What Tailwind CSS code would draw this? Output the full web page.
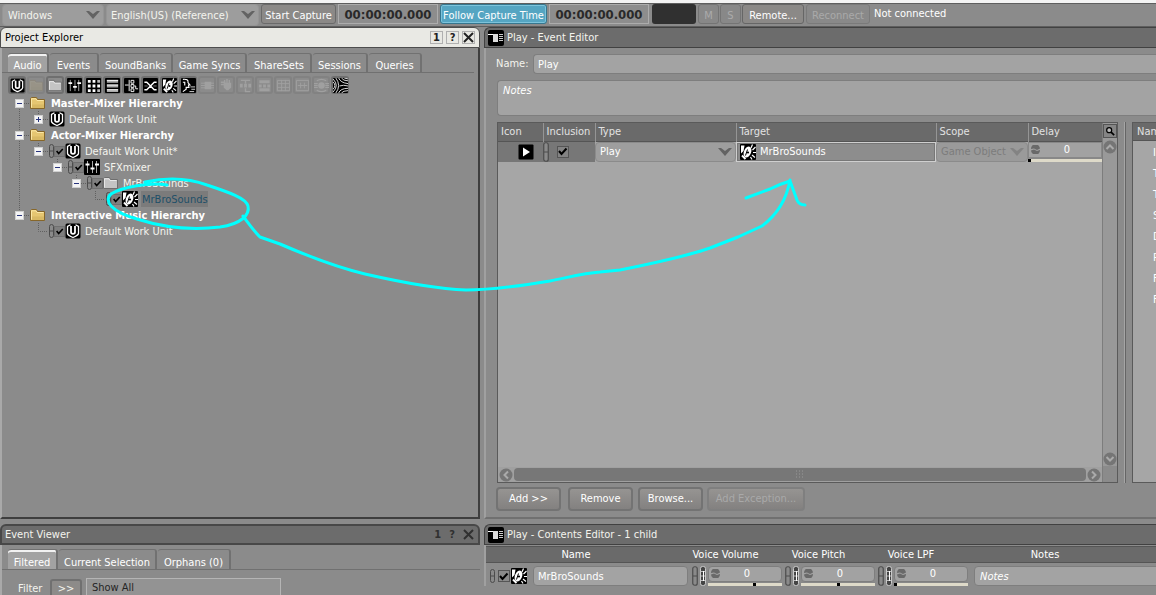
<!DOCTYPE html>
<html lang="en">
<head>
<meta charset="utf-8">
<title>Project Explorer</title>
<script src="https://cdn.jsdelivr.net/npm/@tailwindcss/browser@4"></script>
</head>
<body class="h-screen overflow-hidden bg-[#8b8b8b] font-['DejaVu_Sans_Condensed','Noto_Sans',sans-serif] text-[11px] leading-4 text-[#f4f4ee]">

<svg class="hidden" aria-hidden="true">
  <symbol id="wwise" viewBox="0 0 16 16"><rect x=".5" y=".5" width="15" height="15" rx="1.500" fill="#000"/><path d="M5.500 1.800L2.500 3.500V10.500Q3 12.500 8 14.500 13 12.500 13.500 10.500V3.500L10.500 1.800" fill="none" stroke="#fff" stroke-width="1.300"/><path d="M6 3V9Q6 10.800 8 10.800T10 9V3" fill="none" stroke="#fff" stroke-width="1.800"/></symbol>
  <symbol id="folder" viewBox="0 0 16 16"><path d="M.5 13.500V3.500L1.500 2.500H6.500L7.500 4.500H14.500V13.500z" fill="#e6c671" stroke="#86662a"/><path d="M1.500 12.500V3.800H6L7 5.500H13.500" fill="none" stroke="#fbe7a6"/><path d="M2 9.500H14V13H2z" fill="#c6a452" opacity=".4"/></symbol>
  <symbol id="gfolder" viewBox="0 0 16 16"><path d="M.5 13.500V3.500L1.500 2.500H6.500L7.500 4.500H14.500V13.500z" fill="#c4c4c4" stroke="#6e6e6e"/><path d="M1.500 12.500V3.800H6L7 5.500H13.500" fill="none" stroke="#e8e8e8"/></symbol>
  <symbol id="mixer" viewBox="0 0 16 16"><rect width="16" height="16" rx="1" fill="#000"/><path d="M3.500 2V14M8.500 2V14M12.500 2V14" stroke="#aaa"/><path d="M1.500 5.500H5.500M6.500 9.500H10.500M11 5.500H15" stroke="#fff" stroke-width="2"/></symbol>
  <symbol id="grid" viewBox="0 0 16 16"><rect width="16" height="16" rx="1" fill="#000"/><path d="M2 2h3v3H2zM7 2h3v3H7zM12 7h3v3h-3zM2 7h3v3H2zM2 12h3v3H2zM7 12h3v3H7zM7 7h3v3H7z" fill="#fff"/><path d="M12 2h3v3h-3zM12 12h3v3h-3z" fill="#bbb"/></symbol>
  <symbol id="seq" viewBox="0 0 16 16"><rect width="16" height="16" rx="1" fill="#000"/><path d="M2 2h12v3H2zM2 7h12v3H2zM2 12h12v3H2z" fill="#aaa"/><path d="M2 2.500h12M2 7.500h12M2 12.500h12" stroke="#fff"/></symbol>
  <symbol id="switch" viewBox="0 0 16 16"><rect width="16" height="16" rx="1" fill="#000"/><path d="M1 7.500H5M5.500 2V14M7.500 2.500h3v3h-3zM7.500 7h3v3h-3zM7.500 11.500h3v3h-3zM11 8.500h1.500V11.500H15" fill="none" stroke="#fff"/></symbol>
  <symbol id="blend" viewBox="0 0 16 16"><rect width="16" height="16" rx="1" fill="#000"/><path d="M1.500 4.500H4L12 12.500H14.500M1.500 12.500H4L12 4.500H14.500" fill="none" stroke="#fff" stroke-width="1.500"/><path d="M1.500 8.500H5M11 8.500h3.500" stroke="#777"/></symbol>
  <symbol id="sound" viewBox="0 0 16 16"><rect width="16" height="16" rx="1" fill="#000"/><path d="M1 1.500H4.500L3.500 7 1 9.500z" fill="#fff"/><ellipse cx="7.500" cy="8" rx="3.600" ry="5.600" transform="rotate(22 7.500 8)" fill="#fff"/><path d="M5.500 11.500L7.500 5.500" stroke="#000"/><circle cx="8" cy="8.500" r="1.100" fill="#000"/><path d="M2 11.500L5.500 15" stroke="#fff" stroke-width="2"/><path d="M11 4L12.500 .5M12.500 6L15.500 3M13 8.500H16M12 11L15 13.500M10.500 13L12 15.500" stroke="#fff" stroke-width="1.200"/></symbol>
  <symbol id="voice" viewBox="0 0 16 16"><rect width="16" height="16" rx="1" fill="#000"/><path d="M2 1.500C6 1 8 2 7.500 5L9.500 7.500H8L8.500 10H5.500V12L2 14.500M2 4.500H4V8" fill="none" stroke="#fff" stroke-width="1.200"/><path d="M10 9.500H15M11 12H15M9 14.500H14" stroke="#ddd"/></symbol>
  <symbol id="waves" viewBox="0 0 16 16"><rect width="16" height="16" rx="1" fill="#000"/><path d="M0 4Q4 8 0 12M0 1Q7 8 0 15M3 0Q9 8 3 16M6 0Q8 5 16 6M9 0Q11 3 16 3M12 0L16 1M7 8.500Q11 7 16 8.500M6 16Q8 11 16 11M9 16Q11 13.500 16 13.500" fill="none" stroke="#e4e4e4"/></symbol>
  <symbol id="event" viewBox="0 0 16 16"><rect width="16" height="16" rx="2" fill="#000"/><path d="M0 4.500H5" stroke="#fff"/><path d="M5 4h5v8H5z" fill="#ddd"/><path d="M11 4.500h4M11 6.500h4M11 8.500h4M11 10.500h4" stroke="#ccc"/></symbol>
  <symbol id="d1" viewBox="0 0 16 16"><path d="M1 5.500h14M1 8h14M1 10.500h14" stroke="#a0a0a0"/><path d="M5 4h7v8H5z" fill="#a0a0a0"/></symbol>
  <symbol id="d2" viewBox="0 0 16 16"><path d="M6 2v5M8.500 1v6M11 2v5M2 4.500h5M2 7h5" stroke="#a0a0a0" stroke-width="1.500"/><path d="M5 5h8v5l-3 3H8L5 10z" fill="#a0a0a0"/></symbol>
  <symbol id="d3" viewBox="0 0 16 16"><path d="M3 2.500H13M8 2v4M8 11v3.500H13" fill="none" stroke="#a0a0a0" stroke-width="1.500"/><path d="M2 6h3v4H2zM6.500 6h3v4h-3zM11 6h3v4h-3z" fill="#a0a0a0"/></symbol>
  <symbol id="d4" viewBox="0 0 16 16"><path d="M2.500 2.500h11v3h-11zM2.500 11h11v3h-11z" fill="#a0a0a0"/><path d="M2 7h3v3H2zM6.500 7h3v3h-3zM11 7h3v3h-3z" fill="#a0a0a0"/></symbol>
  <symbol id="d5" viewBox="0 0 16 16"><path d="M1.500 2.500h13v11h-13zM1.500 6h13M1.500 10h13M6 2v12M10 2v12" fill="none" stroke="#a0a0a0"/></symbol>
  <symbol id="d6" viewBox="0 0 16 16"><path d="M1.500 2.500h13v11h-13zM3 8h10M6 5v6M10 5v6" fill="none" stroke="#a0a0a0"/></symbol>
  <symbol id="d7" viewBox="0 0 16 16"><path d="M3 3Q8 0 13 3M3 13Q8 16 13 13M0 6h4M0 8h4M0 10h4M12 6h4M12 8h4M12 10h4" fill="none" stroke="#a0a0a0" stroke-width="1.300"/><circle cx="8" cy="8" r="3.500" fill="#a0a0a0"/></symbol>
  <symbol id="minus" viewBox="0 0 9 9"><rect x=".5" y=".5" width="8" height="8" fill="#f4f4f4" stroke="#d0d0d0"/><path d="M2 4.500h5" stroke="#27337d"/></symbol>
  <symbol id="plus" viewBox="0 0 9 9"><rect x=".5" y=".5" width="8" height="8" fill="#f4f4f4" stroke="#d0d0d0"/><path d="M2 4.500h5M4.500 2v5" stroke="#27337d"/></symbol>
  <symbol id="c-v" viewBox="0 0 19 16"><path d="M9.500 0V16" stroke="#606060" stroke-dasharray="1 1"/></symbol>
  <symbol id="c-end" viewBox="0 0 19 16"><path d="M9.500 0V8.500H19" fill="none" stroke="#606060" stroke-dasharray="1 1"/></symbol>
  <symbol id="c-first" viewBox="0 0 19 16"><path d="M9.500 8V16M10 8.500h9" stroke="#606060" stroke-dasharray="1 1"/><use href="#minus" x="5" y="4" width="9" height="9"/></symbol>
  <symbol id="c-minus" viewBox="0 0 19 16"><path d="M9.500 0V16M10 8.500h9" stroke="#606060" stroke-dasharray="1 1"/><use href="#minus" x="5" y="4" width="9" height="9"/></symbol>
  <symbol id="c-last" viewBox="0 0 19 16"><path d="M9.500 0V8M10 8.500h9" stroke="#606060" stroke-dasharray="1 1"/><use href="#minus" x="5" y="4" width="9" height="9"/></symbol>
  <symbol id="c-plus" viewBox="0 0 19 16"><path d="M9.500 0V8M10 8.500h9" stroke="#606060" stroke-dasharray="1 1"/><use href="#plus" x="5" y="4" width="9" height="9"/></symbol>
  <symbol id="cap" viewBox="0 0 5 14"><rect x=".5" y=".5" width="4" height="13" rx="2" fill="#8a8a8a" stroke="#4c4c4c"/><path d="M1 7h3" stroke="#4c4c4c"/></symbol>
  <symbol id="bigcap" viewBox="0 0 6 20"><rect x=".75" y=".75" width="4.500" height="18.500" rx="2" fill="#8a8a8a" stroke="#4c4c4c" stroke-width="1.200"/><path d="M1 10h4" stroke="#4c4c4c"/></symbol>
  <symbol id="rtpc" viewBox="0 0 6 20"><rect x=".5" y=".5" width="5" height="19" rx="2" fill="#444" stroke="#c9c9c9"/><path d="M1 5.500h4M1 10h4M1 14.500h4" stroke="#bbb"/><path d="M3.500 5v10" stroke="#fff"/></symbol>
  <symbol id="arrow" viewBox="0 0 14 10"><path d="M0 1H3L7 4 11 1H14L7 9z" fill="#636363"/></symbol>
  <symbol id="spin" viewBox="0 0 9 9"><path d="M0 4A4.500 4.500 0 0 1 9 3.500L6 5 3 3.500zM9 5A4.500 4.500 0 0 1 0 5.500L3 4.500 6 6z" fill="#696969"/></symbol>
  <symbol id="tick" viewBox="0 0 11 11"><path d="M2 5L4.500 8 9.500 2.500" fill="none" stroke="#000" stroke-width="2"/></symbol>
  <symbol id="up" viewBox="0 0 14 14"><circle cx="7" cy="7" r="6.500" fill="#757575"/><path d="M3.500 9L7 5.500 10.500 9" fill="none" stroke="#aaa" stroke-width="2"/></symbol>
</svg>

<div class="flex h-full flex-col">
  <header class="flex h-[27px] shrink-0 items-start border-t-[3px] border-[#f3f3f3]">
    <div class="flex h-6 w-full items-start border-y border-[#5e5e5e] bg-[#8b8b8b] pl-[2px] leading-5 [&>button]:pt-px">
      <label class="relative mr-[2px] w-[102px]"><select aria-label="Platform" class="h-[22px] w-full appearance-none rounded-sm border border-[#959595] bg-[#9d9d9d] pl-[5px] pt-px"><option>Windows</option></select><svg class="pointer-events-none absolute right-1 top-[6px] h-[10px] w-[14px]"><use href="#arrow"/></svg></label>
      <label class="relative mr-[2px] w-[153px]"><select aria-label="Language" class="h-[22px] w-full appearance-none rounded-sm border border-[#959595] bg-[#9d9d9d] pl-1 pt-px"><option>English(US) (Reference)</option></select><svg class="pointer-events-none absolute right-1 top-[6px] h-[10px] w-[14px]"><use href="#arrow"/></svg></label>
      <button class="mr-[2px] h-5 w-[75px] rounded-[3px] border border-[#6a6a6a] bg-[#8b8987] text-white">Start Capture</button>
      <div class="mr-[2px] h-5 w-[100px] border border-[#acacac] bg-[#8d8d8d] text-center text-[13px] font-bold leading-5 text-[#292929]">00:00:00.000</div>
      <button class="mr-[2px] h-5 w-[107px] rounded-[3px] border border-[#36768e] bg-[#55a5c2] text-white shadow-[inset_0_0_0_1px_#7dc3db]">Follow Capture Time</button>
      <div class="mr-[3px] h-5 w-[100px] border border-[#acacac] bg-[#8d8d8d] text-center text-[13px] font-bold leading-5 text-[#292929]">00:00:00.000</div>
      <div class="mr-[2px] h-5 w-11 rounded-[3px] bg-[#303030]"></div>
      <button disabled class="mr-px h-5 w-[21px] rounded-[3px] border border-[#747474] bg-[#888] text-[#ababab]">M</button>
      <button disabled class="mr-px h-5 w-[21px] rounded-[3px] border border-[#747474] bg-[#888] text-[#ababab]">S</button>
      <button class="mr-[2px] h-5 w-[62px] rounded-[3px] border border-[#666] bg-[#8b8987] text-white">Remote...</button>
      <button disabled class="mr-1 h-5 w-[64px] rounded-[3px] border border-[#7a7a7a] bg-[#898989] text-[#aaa]">Reconnect</button>
      <span class="whitespace-nowrap text-white">Not connected</span>
    </div>
  </header>

  <main class="flex min-h-0 flex-1 gap-1">
    <section class="flex w-[480px] shrink-0 flex-col">
      <h2 class="flex h-[21px] shrink-0 items-center rounded-t-md border border-[#4d4d4d] bg-[#e9e9e4] pl-1 text-black">
        <span class="flex-1">Project Explorer</span>
        <span class="flex gap-[3px] pr-1 text-[#222]">
          <button aria-label="One" class="flex size-[13px] items-center justify-center border border-[#b0b0b0] font-bold">1</button>
          <button aria-label="Help" class="flex size-[13px] items-center justify-center border border-[#b0b0b0] font-bold">?</button>
          <button aria-label="Close" class="flex size-[13px] items-center justify-center border border-[#b0b0b0]"><svg class="size-[11px] shrink-0" viewBox="0 0 11 11"><path d="M1 1L10 10M10 1L1 10" stroke="#222" stroke-width="2"/></svg></button>
        </span>
      </h2>
      <div class="flex-1 border-x-2 border-b-2 border-[#a9a9a9] border-b-[#3e3e3e] border-r-[#3e3e3e] bg-[#8b8b8b] pt-[5px]">
        <nav class="mr-1 flex h-5 gap-px border-b border-[#707070] pl-[6px] text-white [&>button]:h-[19px] [&>button]:rounded-t-[3px] [&>button]:border-r-2 [&>button]:border-t [&>button]:border-[#717171] [&>button]:pt-1">
          <button class="w-[41px] bg-[#a2a2a2] shadow-[inset_0_2px_0_#f2f2f2]">Audio</button>
          <button class="w-[49px]">Events</button>
          <button class="w-[73px]">SoundBanks</button>
          <button class="w-[73px]">Game Syncs</button>
          <button class="w-[64px]">ShareSets</button>
          <button class="w-[55px]">Sessions</button>
          <button class="w-[53px]">Queries</button>
        </nav>
        <div class="flex gap-px pl-[6px] pt-[3px] [&>button]:flex [&>button]:size-[18px] [&>button]:items-center [&>button]:justify-center [&>button]:rounded-[3px] [&>button]:border-2 [&>button]:border-[#6f6f6f] [&>button:disabled]:border-[#828282] [&_svg]:size-[15px] [&_svg]:shrink-0">
          <button aria-label="Work unit"><svg><use href="#wwise"/></svg></button>
          <button aria-label="Physical folder" disabled><svg class="opacity-15"><use href="#folder"/></svg></button>
          <button aria-label="Virtual folder"><svg><use href="#gfolder"/></svg></button>
          <button aria-label="Actor-mixer"><svg><use href="#mixer"/></svg></button>
          <button aria-label="Random container"><svg><use href="#grid"/></svg></button>
          <button aria-label="Sequence container"><svg><use href="#seq"/></svg></button>
          <button aria-label="Switch container"><svg><use href="#switch"/></svg></button>
          <button aria-label="Blend container"><svg><use href="#blend"/></svg></button>
          <button aria-label="Sound SFX"><svg><use href="#sound"/></svg></button>
          <button aria-label="Sound voice"><svg><use href="#voice"/></svg></button>
          <button aria-label="Audio bus" disabled><svg><use href="#d1"/></svg></button>
          <button aria-label="Auxiliary bus" disabled><svg><use href="#d2"/></svg></button>
          <button aria-label="Music switch" disabled><svg><use href="#d3"/></svg></button>
          <button aria-label="Music playlist" disabled><svg><use href="#d4"/></svg></button>
          <button aria-label="Music segment" disabled><svg><use href="#d5"/></svg></button>
          <button aria-label="Music track" disabled><svg><use href="#d6"/></svg></button>
          <button aria-label="Motion bus" disabled><svg><use href="#d7"/></svg></button>
          <button aria-label="Motion FX"><svg><use href="#waves"/></svg></button>
        </div>
        <ul class="pl-2 pt-px [&>li]:flex [&>li]:h-4 [&>li]:items-center [&_.cell]:h-4 [&_.cell]:w-[19px] [&_.cell]:shrink-0 [&_.icon]:size-4 [&_.icon]:shrink-0 [&_.cap]:ml-px [&_.cap]:h-[14px] [&_.cap]:w-[5px] [&_.cap]:shrink-0 [&_.box]:size-[11px] [&_.box]:shrink-0 [&_.box]:bg-[#7f7f7f] [&_.box]:border [&_.box]:border-[#707070] [&_span]:pl-1 [&_span]:pt-px [&_b]:pl-[5px] [&_b]:pt-px [&_b]:text-white">
          <li><svg class="cell"><use href="#c-first"/></svg><svg class="icon ml-px"><use href="#folder"/></svg><b>Master-Mixer Hierarchy</b></li>
          <li><svg class="cell"><use href="#c-v"/></svg><svg class="cell"><use href="#c-plus"/></svg><svg class="icon ml-px"><use href="#wwise"/></svg><span>Default Work Unit</span></li>
          <li><svg class="cell"><use href="#c-minus"/></svg><svg class="icon ml-px"><use href="#folder"/></svg><b>Actor-Mixer Hierarchy</b></li>
          <li><svg class="cell"><use href="#c-v"/></svg><svg class="cell"><use href="#c-last"/></svg><svg class="cap"><use href="#cap"/></svg><svg class="box"><use href="#tick"/></svg><svg class="icon"><use href="#wwise"/></svg><span>Default Work Unit*</span></li>
          <li><svg class="cell"><use href="#c-v"/></svg><i class="cell"></i><svg class="cell"><use href="#c-last"/></svg><svg class="cap"><use href="#cap"/></svg><svg class="box"><use href="#tick"/></svg><svg class="icon"><use href="#mixer"/></svg><span>SFXmixer</span></li>
          <li><svg class="cell"><use href="#c-v"/></svg><i class="cell"></i><i class="cell"></i><svg class="cell"><use href="#c-last"/></svg><svg class="cap"><use href="#cap"/></svg><svg class="box"><use href="#tick"/></svg><svg class="icon"><use href="#gfolder"/></svg><span>MrBroSounds</span></li>
          <li><svg class="cell"><use href="#c-v"/></svg><i class="cell"></i><i class="cell"></i><i class="cell"></i><svg class="cell"><use href="#c-end"/></svg><svg class="cap"><use href="#cap"/></svg><svg class="box"><use href="#tick"/></svg><svg class="icon"><use href="#sound"/></svg><span class="ml-[3px] h-4 bg-[#7b7b7b] pl-px! text-[#1e4f68]">MrBroSounds</span></li>
          <li><svg class="cell"><use href="#c-last"/></svg><svg class="icon ml-px"><use href="#folder"/></svg><b>Interactive Music Hierarchy</b></li>
          <li><i class="cell"></i><svg class="cell"><use href="#c-end"/></svg><svg class="cap"><use href="#cap"/></svg><svg class="box"><use href="#tick"/></svg><svg class="icon"><use href="#wwise"/></svg><span>Default Work Unit</span></li>
        </ul>
      </div>
    </section>

    <section class="flex min-w-0 flex-1 flex-col">
      <h2 class="flex h-[21px] shrink-0 items-center gap-[3px] rounded-tl-md border border-r-0 border-[#414141] bg-[#6c6c6c] pl-[3px]"><svg class="size-4"><use href="#event"/></svg>Play - Event Editor</h2>
      <div class="flex min-h-0 flex-1 flex-col border-b-2 border-l-2 border-[#a0a0a0] border-b-[#707070] pl-[11px] pt-[6px]">
        <label class="-ml-px flex h-5 items-center"><span class="w-[37px]">Name:</span><input value="Play" class="h-5 flex-1 rounded-l-sm border border-r-0 border-[#7e7e7e] bg-[#a3a3a3] pl-1 text-white"></label>
        <textarea aria-label="Notes" placeholder="Notes" class="mt-[6px] h-9 shrink-0 resize-none rounded-l-sm border border-r-0 border-[#7e7e7e] bg-[#a3a3a3] pl-[5px] pt-[2px] italic placeholder:text-white"></textarea>
        <div class="mt-[6px] flex min-h-0 flex-1">
          <div class="flex w-[621px] shrink-0 border border-[#5a5a5a]">
            <div class="flex min-w-0 flex-1 flex-col bg-[#a6a6a6]">
              <table class="w-full table-fixed border-collapse">
                <colgroup><col class="w-[45px]"><col class="w-[52px]"><col class="w-[141px]"><col class="w-[200px]"><col class="w-[92px]"><col></colgroup>
                <thead><tr class="h-[18px] border-b border-[#555] bg-[#6a6a6a] text-left text-[#e2e2e2] [&>th]:p-0 [&>th]:pl-[3px] [&>th]:pt-px [&>th]:font-normal [&>th+th]:border-l [&>th+th]:border-[#959595]"><th>Icon</th><th>Inclusion</th><th>Type</th><th>Target</th><th>Scope</th><th>Delay</th></tr></thead>
                <tbody><tr class="h-5 [&>td]:p-0">
                  <td class="bg-[#777]"><svg class="ml-5 size-4" viewBox="0 0 16 16"><rect x=".5" y=".5" width="15" height="15" rx="1" fill="#000"/><path d="M5 3.500L12 8 5 12.500z" fill="#fff"/></svg></td>
                  <td class="bg-[#777]"><div class="flex items-center"><svg class="h-5 w-[6px]"><use href="#bigcap"/></svg><input type="checkbox" checked aria-label="Inclusion" class="ml-2 size-[12px] appearance-none border border-[#555] bg-[#838383]"><svg class="pointer-events-none -ml-[12px] size-[11px]"><use href="#tick"/></svg></div></td>
                  <td><label class="relative block"><select aria-label="Type" class="h-5 w-full appearance-none rounded-sm border border-[#8b8b8b] bg-[#9e9e9e] pl-1 text-white"><option>Play</option></select><svg class="pointer-events-none absolute right-1 top-[5px] h-[10px] w-[14px]"><use href="#arrow"/></svg></label></td>
                  <td><button class="flex h-5 w-full items-center gap-1 border border-[#cfcfcf] bg-[#8d8d8d] pl-[3px] text-white shadow-[inset_0_0_0_1px_#777]"><svg class="size-4"><use href="#sound"/></svg>MrBroSounds</button></td>
                  <td><label class="relative block"><select disabled aria-label="Scope" class="h-5 w-full appearance-none rounded-sm border border-[#8b8b8b] bg-[#9a9a9a] pl-1 text-[#7c7c7c] opacity-100"><option>Game Object</option></select><svg class="pointer-events-none absolute right-1 top-[5px] h-[10px] w-[14px] opacity-40"><use href="#arrow"/></svg></label></td>
                  <td><div class="relative"><input value="0" aria-label="Delay" class="block h-4 w-full border border-[#888] bg-[#a2a2a2] pl-1 text-center text-white"><svg class="absolute left-[3px] top-[3px] size-[9px]"><use href="#spin"/></svg><input type="range" value="0" aria-label="Delay slider" class="block h-1 w-full appearance-none border-t border-[#888] bg-[#dedac9] [&::-webkit-slider-thumb]:h-[3px] [&::-webkit-slider-thumb]:w-[3px] [&::-webkit-slider-thumb]:appearance-none [&::-webkit-slider-thumb]:bg-black"></div></td>
                </tr></tbody>
              </table>
              <div class="flex-1"></div>
              <div class="flex h-[15px] items-center gap-px bg-[#a0a0a0] pl-px"><svg class="size-[14px] -rotate-90"><use href="#up"/></svg><div class="flex h-[13px] flex-1 items-center justify-center rounded-[4px] bg-[#777]"><svg class="size-[9px]" viewBox="0 0 9 9"><path d="M0 1h9M0 4h9M0 7h9" stroke="#999" stroke-dasharray="1 2"/></svg></div><svg class="mr-px size-[14px] rotate-90"><use href="#up"/></svg></div>
            </div>
            <div class="flex w-[15px] flex-col items-center border-l border-[#7d7d7d] bg-[#999]">
              <button aria-label="Search" class="mt-px flex size-[14px] items-center justify-center border border-[#555] bg-[#858585]"><svg class="size-[10px]" viewBox="0 0 12 12"><circle cx="5" cy="5" r="3" fill="#bbb" stroke="#000" stroke-width="1.500"/><path d="M7 7L11 11" stroke="#000" stroke-width="2"/></svg></button>
              <svg class="mt-[2px] size-[14px]"><use href="#up"/></svg>
              <div class="flex-1"></div>
              <svg class="size-[14px] rotate-180"><use href="#up"/></svg>
              <div class="h-4 w-full bg-[#8b8b8b]"></div>
            </div>
          </div>
          <div class="ml-[6px] w-[2px] border-l border-[#a5a5a5] bg-[#656565]"></div>
          <div class="ml-[6px] flex-1 overflow-hidden border border-r-0 border-[#5a5a5a] bg-[#a6a6a6]">
            <div class="h-[18px] border-b border-[#555] bg-[#6a6a6a] pl-1 pt-px text-[#e2e2e2]">Name</div>
            <ul class="pl-5 pt-1 text-white [&>li]:h-[21px] [&>li]:whitespace-nowrap"><li>Initial Delay</li><li>Type</li><li>Target</li><li>Scope</li><li>Delay</li><li>Probability</li><li>Fade Time</li><li>Fade Curve</li></ul>
          </div>
        </div>
        <div class="-ml-px flex h-[34px] shrink-0 items-start pt-1 text-white [&>button]:h-6 [&>button]:rounded-[4px] [&>button]:border-2 [&>button]:border-[#737373] [&>button]:bg-linear-to-b [&>button]:from-[#969492] [&>button]:to-[#838180]">
          <button class="mr-[7px] w-[65px]">Add &gt;&gt;</button>
          <button class="mr-[5px] w-[65px]">Remove</button>
          <button class="mr-1 w-[65px]">Browse...</button>
          <button disabled class="w-[98px] border-[#7f7f7f]! text-[#a9a9a9]">Add Exception...</button>
        </div>
      </div>
    </section>
  </main>

  <footer class="mt-[5px] flex h-[71px] shrink-0 gap-1">
    <section class="w-[480px] shrink-0">
      <h2 class="flex h-[21px] items-center rounded-t-md border-2 border-[#484848] bg-[#6c6c6c] pl-[3px]"><span class="flex-1">Event Viewer</span><span class="flex items-center gap-2 pr-1 font-bold text-[#303030]"><button aria-label="One">1</button><button aria-label="Help">?</button><button aria-label="Close"><svg class="size-[11px]" viewBox="0 0 11 11"><path d="M1 1L10 10M10 1L1 10" stroke="#303030" stroke-width="2"/></svg></button></span></h2>
      <div class="border-l-2 border-[#a9a9a9] pt-1">
        <nav class="flex h-[21px] gap-px border-b border-[#707070] pl-[6px] text-white [&>button]:h-5 [&>button]:rounded-t-[3px] [&>button]:border-r-2 [&>button]:border-t [&>button]:border-[#717171] [&>button]:pt-[5px]">
          <button class="w-[50px] bg-[#a2a2a2] shadow-[inset_0_2px_0_#f2f2f2]">Filtered</button>
          <button class="w-[98px]">Current Selection</button>
          <button class="w-[73px]">Orphans (0)</button>
        </nav>
        <div class="flex items-start pl-4 pt-2"><label for="filter" class="w-8 pt-[3px]">Filter</label><button class="mr-1 mt-px h-5 w-8 rounded-[3px] border-2 border-[#707070] bg-[#8d8b89]">&gt;&gt;</button><input id="filter" value="Show All" class="h-5 w-[195px] border border-[#b5b5b5] bg-[#939393] pb-px pl-[5px] text-[#252525]"></div>
      </div>
    </section>
    <section class="min-w-0 flex-1">
      <h2 class="flex h-[21px] items-center gap-[3px] rounded-tl-md border border-r-0 border-[#414141] bg-[#6c6c6c] pl-[3px]"><svg class="size-4"><use href="#event"/></svg>Play - Contents Editor - 1 child</h2>
      <div class="border-l-2 border-[#a0a0a0] pt-px">
        <table class="w-full table-fixed border-collapse">
          <colgroup><col class="w-[204px]"><col class="w-[93px]"><col class="w-[93px]"><col class="w-[94px]"><col></colgroup>
          <thead><tr class="h-4 border-y border-[#555] bg-[#6a6a6a] text-white [&>th]:whitespace-nowrap [&>th]:p-0 [&>th]:font-normal [&>th]:leading-[14px]"><th><div class="pr-6">Name</div></th><th><div class="pr-[22px]">Voice Volume</div></th><th><div class="pr-[22px]">Voice Pitch</div></th><th><div class="pr-6">Voice LPF</div></th><th><div class="pr-9">Notes</div></th></tr></thead>
          <tbody><tr class="[&>td]:p-0 [&>td]:pt-[3px]">
            <td><div class="flex items-center pl-1"><svg class="h-4 w-[5px]"><use href="#cap"/></svg><input type="checkbox" checked aria-label="Include" class="ml-[3px] size-[12px] appearance-none border border-[#555] bg-[#8a8a8a]"><svg class="pointer-events-none -ml-[12px] size-[11px]"><use href="#tick"/></svg><svg class="ml-[2px] size-4"><use href="#sound"/></svg><input value="MrBroSounds" aria-label="Name" class="ml-[6px] mr-[2px] h-5 min-w-0 flex-1 rounded-sm border border-[#7e7e7e] bg-[#a3a3a3] pl-1 text-white"></div></td>
            <td><div class="flex gap-[2px] pl-[2px]"><svg class="h-5 w-[6px]"><use href="#bigcap"/></svg><svg class="h-5 w-[6px]"><use href="#rtpc"/></svg><div class="relative w-[74px]"><input value="0" aria-label="Voice volume" class="block h-4 w-full rounded-sm border border-[#7e7e7e] bg-[#a2a2a2] pl-1 text-center text-white"><svg class="absolute left-[3px] top-[3px] size-[9px]"><use href="#spin"/></svg><input type="range" value="64" aria-label="Voice volume slider" class="block h-1 w-full appearance-none border-t border-[#888] bg-[#dedac9] [&::-webkit-slider-thumb]:h-[3px] [&::-webkit-slider-thumb]:w-[3px] [&::-webkit-slider-thumb]:appearance-none [&::-webkit-slider-thumb]:bg-black"></div></div></td>
            <td><div class="flex gap-[2px] pl-[2px]"><svg class="h-5 w-[6px]"><use href="#bigcap"/></svg><svg class="h-5 w-[6px]"><use href="#rtpc"/></svg><div class="relative w-[74px]"><input value="0" aria-label="Voice pitch" class="block h-4 w-full rounded-sm border border-[#7e7e7e] bg-[#a2a2a2] pl-1 text-center text-white"><svg class="absolute left-[3px] top-[3px] size-[9px]"><use href="#spin"/></svg><input type="range" value="50" aria-label="Voice pitch slider" class="block h-1 w-full appearance-none border-t border-[#888] bg-[#dedac9] [&::-webkit-slider-thumb]:h-[3px] [&::-webkit-slider-thumb]:w-[3px] [&::-webkit-slider-thumb]:appearance-none [&::-webkit-slider-thumb]:bg-black"></div></div></td>
            <td><div class="flex gap-[2px] pl-[2px]"><svg class="h-5 w-[6px]"><use href="#bigcap"/></svg><svg class="h-5 w-[6px]"><use href="#rtpc"/></svg><div class="relative w-[74px]"><input value="0" aria-label="Voice LPF" class="block h-4 w-full rounded-sm border border-[#7e7e7e] bg-[#a2a2a2] pl-1 text-center text-white"><svg class="absolute left-[3px] top-[3px] size-[9px]"><use href="#spin"/></svg><input type="range" value="0" aria-label="Voice LPF slider" class="block h-1 w-full appearance-none border-t border-[#888] bg-[#dedac9] [&::-webkit-slider-thumb]:h-[3px] [&::-webkit-slider-thumb]:w-[3px] [&::-webkit-slider-thumb]:appearance-none [&::-webkit-slider-thumb]:bg-black"></div></div></td>
            <td><input placeholder="Notes" aria-label="Child notes" class="ml-1 block h-5 w-full rounded-l-sm border border-[#7e7e7e] bg-[#a3a3a3] pl-[5px] italic placeholder:text-white"></td>
          </tr></tbody>
        </table>
      </div>
    </section>
  </footer>
</div>

<svg class="pointer-events-none absolute left-0 top-0" width="1156" height="595" viewBox="0 0 1156 595" fill="none" stroke="#00ffff" stroke-width="3" stroke-linecap="round" stroke-linejoin="round" aria-hidden="true">
  <path d="M167 185C150 182 122 187 111 194C103 201 112 212 137 219C165 228 195 230 220 227C241 224 250 215 248 206C246 198 228 192 207 185C188 178 169 177 145 182"/>
  <path d="M243 216C249 224 253 230 260 237L280 244C310 257 340 268 365 274C400 282 440 289 466 290C490 290 520 286 550 281C570 277 585 273 600 272L620 270C650 264 690 255 710 248L738 237L762 226C774 217 786 203 790 180M746 198L770 189Q780 184 790 181L797 200Q799 205 805 205"/>
</svg>
</body>
</html>
